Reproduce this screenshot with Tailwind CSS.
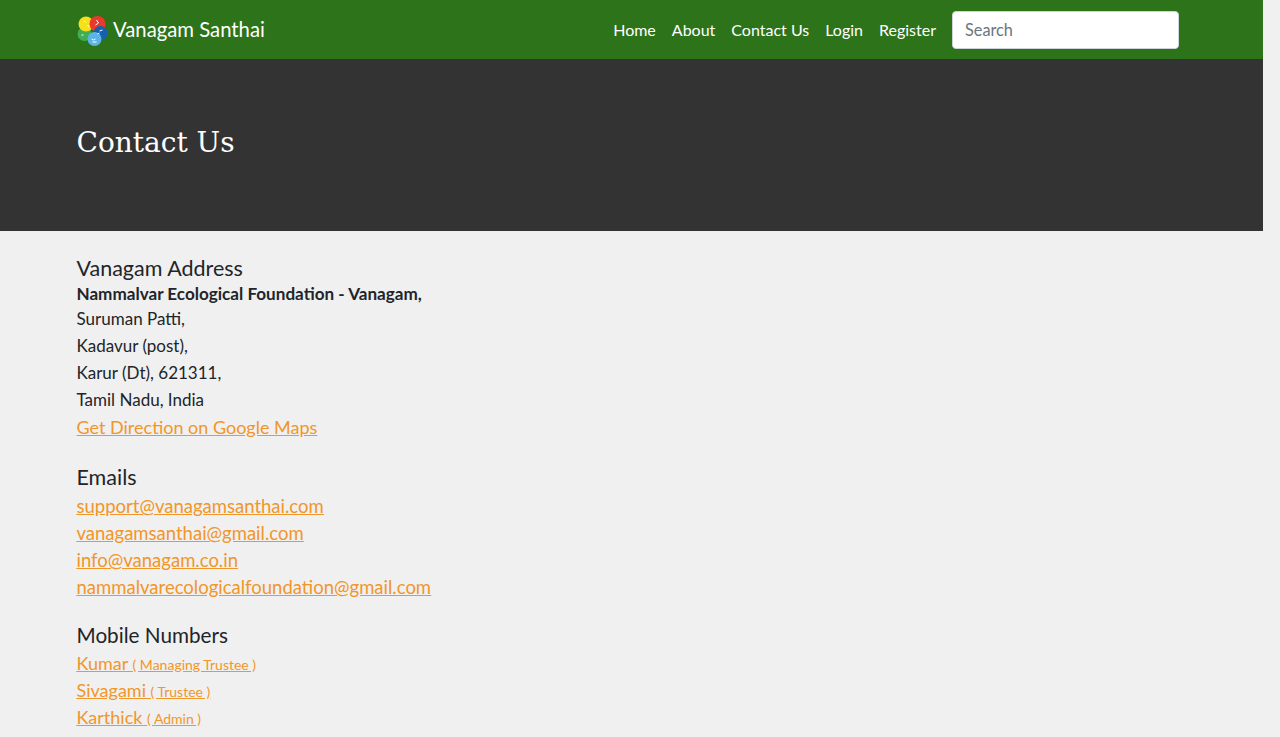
<!DOCTYPE html>
<html lang="en">
<head>
  <meta charset="UTF-8">
  <title>Contact Us</title>
  <script src="https://cdn.jsdelivr.net/npm/@tailwindcss/browser@4"></script>
</head>
<body class="bg-[#f0f0f0] h-[737px] overflow-hidden font-['Lato',sans-serif] text-[#212529]">
  <div class="w-[1263px]">
    <nav class="bg-[#2d7319] h-[59px] flex items-center justify-between pl-[76.500px] pr-[84px]">
      <a class="flex items-center gap-[6.500px] text-white text-[20.300px] leading-[28px] -mt-[2px]">
        <svg class="mt-[3px]" width="30" height="31" viewBox="0 0 29 31">
          <circle cx="7" cy="19" r="7" fill="#3fae55"/>
          <circle cx="8.500" cy="9" r="7.500" fill="#f6e01c"/>
          <circle cx="20" cy="9" r="8" fill="#e8392a"/>
          <circle cx="23" cy="18" r="7" fill="#1561b0"/>
          <circle cx="17" cy="24" r="7" fill="#5fb2e6"/>
          <path d="M6 6l2 1M10 10l2 2M19 5l2 3-3 2M22 16l3-1M20 19l2-1M4 20h2M14 24l2 1 2-1M15 27h4" stroke="#fff" stroke-width="1" fill="none"/>
        </svg>
        Vanagam Santhai
      </a>
      <div class="flex items-center text-white text-[16px]">
        <a class="mr-4">Home</a><a class="mr-4">About</a><a class="mr-4">Contact Us</a><a class="mr-4">Login</a><a class="mr-4">Register</a>
        <input placeholder="Search" class="w-[227px] h-[38px] bg-white rounded border border-[#ced4da] px-3 text-[16.300px] placeholder:text-[#6c757d]">
      </div>
    </nav>
    <div class="bg-[#333333] h-[172px] pl-[76.500px] pt-[66px]">
      <h1 class="text-white text-[28px] leading-[36px] font-['DejaVu_Serif',serif]">Contact Us</h1>
    </div>
    <div class="pl-[76.500px] pt-[24px]">
      <h5 class="text-[21.500px] leading-[26px]">Vanagam Address</h5>
      <p class="font-bold text-[17.100px] leading-[26px]">Nammalvar Ecological Foundation - Vanagam,</p>
      <p class="text-[17px] leading-[27px] -mt-[2px]">Suruman Patti,</p>
      <p class="text-[17px] leading-[27px]">Kadavur (post),</p>
      <p class="text-[17px] leading-[27px]">Karur (Dt), 621311,</p>
      <p class="text-[17px] leading-[27px]">Tamil Nadu, India</p>
      <a class="block text-[18px] underline text-[#f0962a] leading-[30px] -mt-[1px]">Get Direction on Google Maps</a>
      <h5 class="text-[21.500px] leading-[26px] mt-[22px]">Emails</h5>
      <div class="flex flex-col items-start text-[18.500px] underline text-[#f0962a] leading-[27px] mt-[3px]">
        <a>support@vanagamsanthai.com</a><a>vanagamsanthai@gmail.com</a><a>info@vanagam.co.in</a><a>nammalvarecologicalfoundation@gmail.com</a>
      </div>
      <h5 class="text-[20.700px] leading-[26px] mt-[21px]">Mobile Numbers</h5>
      <div class="flex flex-col items-start text-[18px] underline text-[#f0962a] leading-[27px] mt-[2px]">
        <a class="h-[27px]">Kumar <small class="text-[14px] leading-none">( Managing Trustee )</small></a>
        <a class="h-[27px]">Sivagami <small class="text-[14px] leading-none">( Trustee )</small></a>
        <a class="h-[27px]">Karthick <small class="text-[14px] leading-none">( Admin )</small></a>
      </div>
    </div>
  </div>
</body>
</html>
